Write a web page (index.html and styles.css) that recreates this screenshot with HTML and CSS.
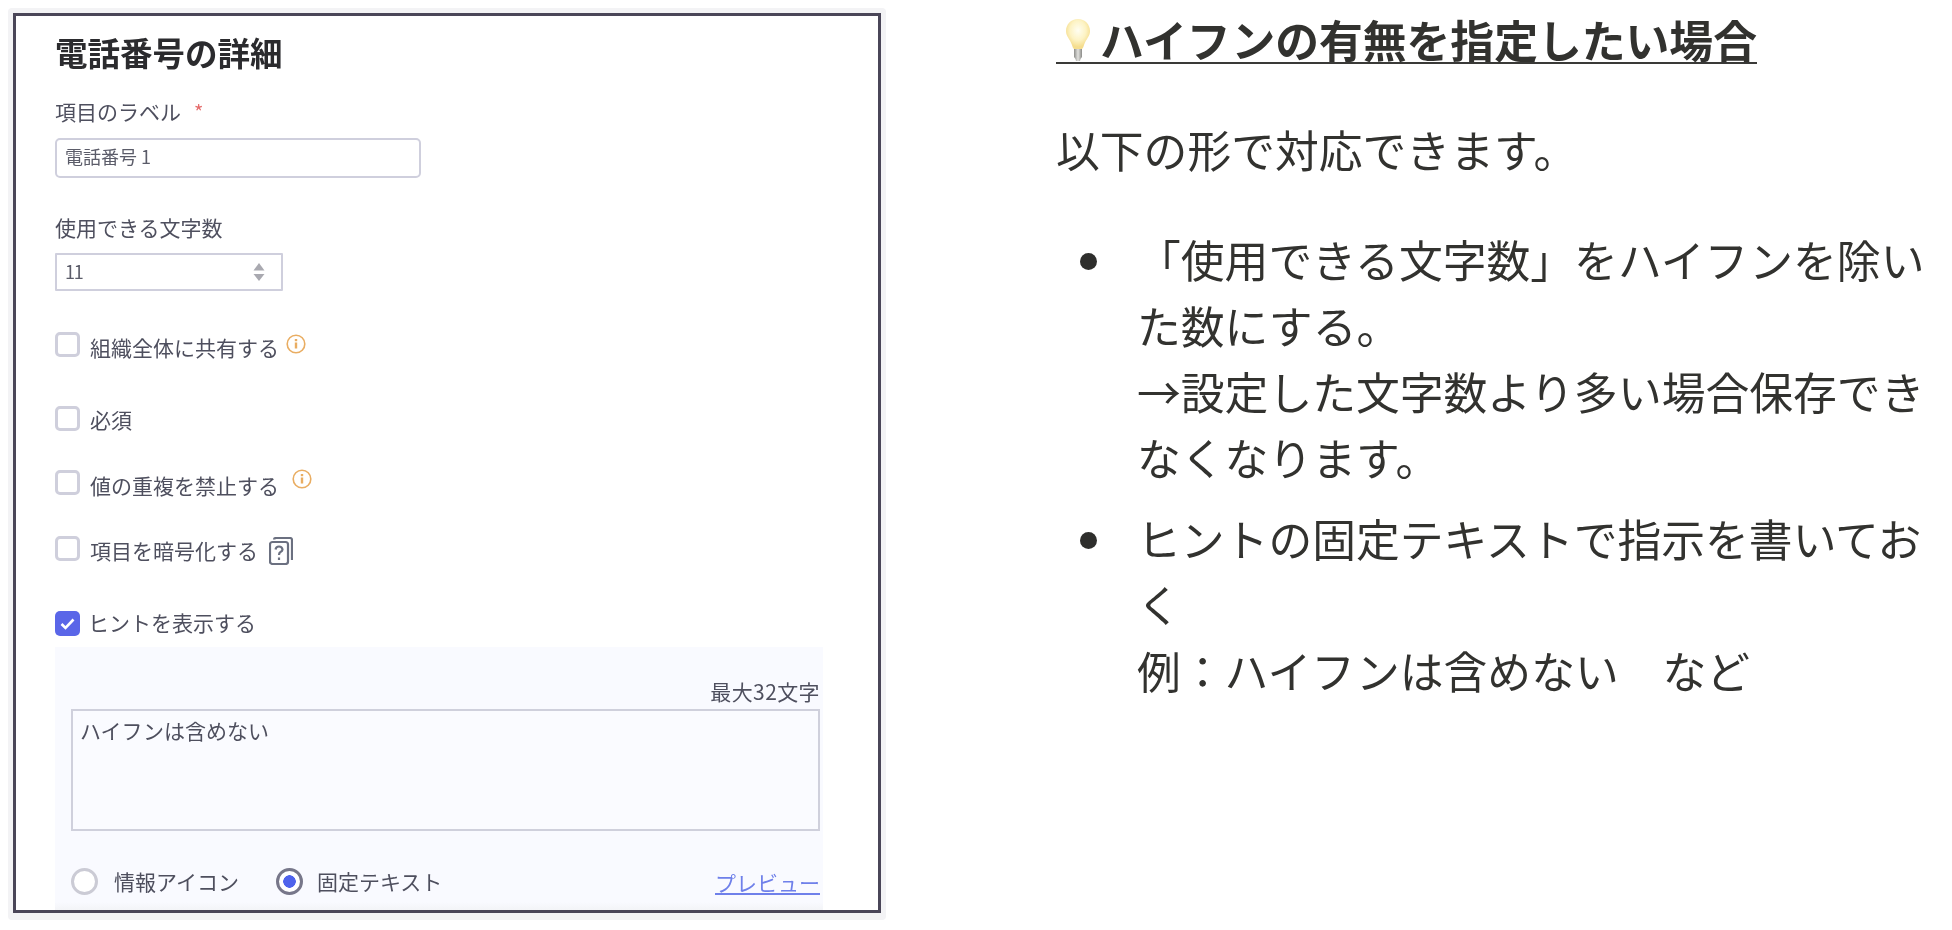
FILE: index.html
```html
<!DOCTYPE html>
<html lang="ja">
<head>
<meta charset="utf-8">
<title>ハイフンの有無を指定したい場合</title>
<link rel="stylesheet" href="styles.css">
</head>
<body>
<main class="page">
  <section class="shot-outer">
    <div class="shot">
      <h2 class="title">電話番号の詳細</h2>
      <div class="label label-first">項目のラベル<span class="req">*</span></div>
      <div class="field field-text">電話番号 1</div>
      <div class="label label-second">使用できる文字数</div>
      <div class="field field-num">
        <span class="num-value">11</span>
        <svg class="spin" width="12" height="18" viewBox="0 0 12 18"><path d="M6 0 11.500 7.500H.5z" fill="#a9a9b0"/><path d="M6 18 11.500 11H.5z" fill="#a9a9b0"/></svg>
      </div>

      <div class="row row-share">
        <span class="box"></span><span class="row-text">組織全体に共有する</span>
        <svg class="ico ico-a" width="20" height="20" viewBox="0 0 20 20"><circle cx="10" cy="10" r="8.800" fill="none" stroke="#e9ad62" stroke-width="1.600"/><rect x="8.800" y="8.500" width="2.400" height="6" fill="#e9ad62"/><rect x="8.800" y="5" width="2.400" height="2.200" fill="#e9ad62"/></svg>
      </div>
      <div class="row row-req"><span class="box"></span><span class="row-text">必須</span></div>
      <div class="row row-uniq">
        <span class="box"></span><span class="row-text">値の重複を禁止する</span>
        <svg class="ico ico-b" width="20" height="20" viewBox="0 0 20 20"><circle cx="10" cy="10" r="8.800" fill="none" stroke="#e9ad62" stroke-width="1.600"/><rect x="8.800" y="8.500" width="2.400" height="6" fill="#e9ad62"/><rect x="8.800" y="5" width="2.400" height="2.200" fill="#e9ad62"/></svg>
      </div>
      <div class="row row-enc">
        <span class="box"></span><span class="row-text">項目を暗号化する</span>
        <svg class="ico ico-c" width="24" height="28" viewBox="0 0 24 28" fill="none" stroke="#6b7080" stroke-width="2.200"><rect x="1" y="5" width="18" height="22" rx="2.500"/><path d="M5 2.500Q5 1 7 1H21Q23 1 23 3V23"/><path d="M6.500 12.500Q7 9.500 10 9.500T13.500 12.500Q13.500 14 11.500 15Q10 15.800 10 18"/><path d="M10 20.500V23"/></svg>
      </div>
      <div class="row row-hint">
        <span class="box box-on"><svg width="25" height="25" viewBox="0 0 25 25"><path d="M6.500 13 10.500 17 18.500 8.500" fill="none" stroke="#fff" stroke-width="2.600"/></svg></span>
        <span class="row-text">ヒントを表示する</span>
      </div>

      <div class="hint">
        <div class="count">最大32文字</div>
        <div class="area">ハイフンは含めない</div>
        <div class="radios">
          <span class="radio"></span><span class="radio-text">情報アイコン</span>
          <span class="radio radio-on"></span><span class="radio-text">固定テキスト</span>
          <a class="preview" href="#">プレビュー</a>
        </div>
      </div>
    </div>
  </section>

  <article class="note">
    <h1 class="note-title">
      <svg class="bulb" width="44" height="44" viewBox="0 0 44 44">
        <defs>
          <radialGradient id="glass" cx="50%" cy="38%" r="55%"><stop offset="0" stop-color="#fffef2"/><stop offset=".6" stop-color="#fdf3c4"/><stop offset="1" stop-color="#f5dd8e"/></radialGradient>
          <linearGradient id="base" x1="0" x2="1" y1="0" y2="0"><stop offset="0" stop-color="#8d8d8a"/><stop offset=".5" stop-color="#e2e2df"/><stop offset="1" stop-color="#8a8a87"/></linearGradient>
        </defs>
        <path d="M22 1C15 1 10 6.500 10 13C10 18.500 14 21 16 27C16.500 29 17 30 18 31H26C27 30 27.500 29 28 27C30 21 34 18.500 34 13C34 6.500 29 1 22 1Z" fill="url(#glass)"/>
        <path d="M18 31H26V39Q24 41 24 43H20Q20 41 18 39Z" fill="url(#base)"/>
      </svg>
      <span class="note-title-text">ハイフンの有無を指定したい場合</span>
    </h1>
    <p class="lead">以下の形で対応できます。</p>
    <ul class="items">
      <li>「使用できる文字数」をハイフンを除いた数にする。<br>→設定した文字数より多い場合保存できなくなります。</li>
      <li>ヒントの固定テキストで指示を書いておく<br>例：ハイフンは含めない　など</li>
    </ul>
  </article>
</main>
</body>
</html>
```

FILE: styles.css
```css
* { box-sizing: border-box; }
html, body { margin: 0; height: 100%; background: #fff; }
body {
  font-family: "Noto Sans CJK JP", "Noto Sans", sans-serif;
  overflow: hidden;
}
.page { display: flex; align-items: flex-start; }

/* left: screenshot card */
.shot-outer {
  width: 878px;
  height: 912px;
  margin: 8px 0 0 8px;
  padding: 5px 5px 7px;
  background: #f3f3f5;
  border-radius: 4px;
  flex: none;
  filter: blur(.35px);
}
.shot {
  height: 100%;
  padding: 14px 55px 0 39px;
  background: #fff;
  border: 3px solid #4a4658;
  overflow: hidden;
  color: #4e4f5e;
  font-size: 21px;
  line-height: 30px;
}
.title {
  margin: 0;
  font-size: 32.500px;
  line-height: 44px;
  font-weight: 700;
  color: #2b2b2e;
}
.label-first { margin-top: 22px; }
.label-second { margin-top: 34px; }
.req { margin-left: 13px; color: #e56b6b; font-size: 20px; }
.field {
  margin-top: 11px;
  padding-left: 8px;
  border: 2px solid #cfcfdd;
  font-size: 18px;
  color: #5b5c69;
  display: flex;
  align-items: center;
}
.field-text { width: 366px; height: 40px; border-radius: 5px; padding-bottom: 4px; }
.field-num { width: 228px; height: 38px; justify-content: space-between; padding: 0 16px 2px 8px; border-radius: 1px; }
.num-value { letter-spacing: -1.200px; }
.spin { margin-top: 2px; }

.row { display: flex; align-items: flex-start; height: 30px; }
.row-share { margin-top: 41px; }
.row-req { margin-top: 44px; }
.row-uniq { margin-top: 34px; }
.row-enc { margin-top: 36px; }
.row-hint { margin-top: 45px; height: 25px; align-items: center; }
.box {
  flex: none;
  width: 25px;
  height: 25px;
  margin-right: 10px;
  background: #fff;
  border: 3px solid #cfcfdc;
  border-radius: 5px;
}
.box-on { background: #5a66e8; border: 0; }
.box-on svg { display: block; }
.row-text { margin-top: 0; }
.row-req .row-text { margin-top: -2px; }
.row-enc .row-text { margin-top: -1px; }
.row-hint .row-text { margin: -3px 0 0 -2px; }
.ico { flex: none; }
.ico-a { margin: 2px 0 0 7px; }
.ico-b { margin: -1px 0 0 13px; }
.ico-c { margin: 1px 0 0 11px; }

.hint {
  margin-top: 11px;
  padding: 29px 3px 14px 16px;
  background: linear-gradient(#f9faff calc(100% - 8px), #f3f4f7);
}
.count { text-align: right; letter-spacing: .4px; }
.area {
  height: 122px;
  margin-top: 3px;
  padding: 4px 7px;
  border: 2px solid #cfd0dc;
  background: #fafbff;
}
.radios { display: flex; align-items: center; height: 30px; margin-top: 35px; }
.radio {
  flex: none;
  width: 27px;
  height: 27px;
  margin-right: 16px;
  border: 3px solid #cbcbd5;
  border-radius: 50%;
  background: #fff;
}
.radio-on {
  margin-left: 37px;
  margin-right: 14px;
  border-color: #77778a;
  background: radial-gradient(circle, #4f63ec 0 6px, #fff 6.500px);
}
.preview { margin: 2px 0 0 auto; color: #6f80ea; text-decoration: underline; }

/* right: note */
.note {
  flex: none;
  width: 884px;
  margin-left: 170px;
  padding-top: 18px;
  color: #32322f;
  font-size: 43.800px;
  line-height: 66px;
  filter: blur(.35px);
}
.note-title {
  display: flex;
  width: fit-content;
  align-items: center;
  height: 46px;
  margin: 0;
  border-bottom: 2px solid #3a3a38;
  font-size: 43.800px;
  line-height: 44px;
  font-weight: 700;
}
.note-title-text { margin-bottom: 3px; }
.bulb { flex: none; display: block; }
.lead { margin: 52px 0 0; }
.items { margin: 44px 0 0; padding: 0 0 0 81px; list-style: none; }
.items li { position: relative; }
.items li::before {
  content: "";
  position: absolute;
  left: -57px;
  top: 27px;
  width: 17px;
  height: 17px;
  border-radius: 50%;
  background: #2e2e2c;
}
.items li + li { margin-top: 15px; }
```
